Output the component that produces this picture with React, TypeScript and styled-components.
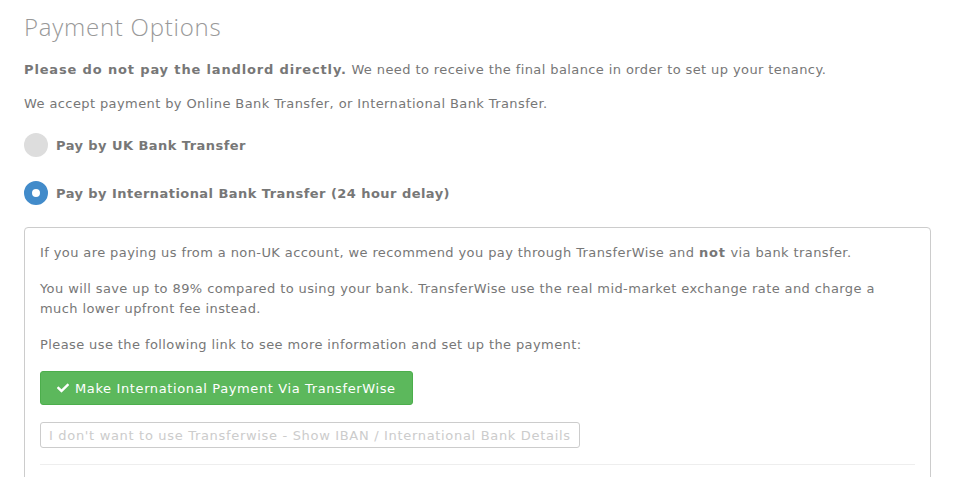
import styled, { createGlobalStyle } from "styled-components";
import { FaCheck } from "react-icons/fa";

const GlobalStyle = createGlobalStyle`
  body {
    margin: 0;
    background: #ffffff;
    font-family: "DejaVu Sans", Verdana, sans-serif;
    color: #777777;
  }
`;

const App = () => {
  return (
    <>
      <GlobalStyle />
      <Page>
        <Title>Payment Options</Title>
        <Text $gap={14}>
          <strong>Please do not pay the landlord directly.</strong> We need to
          receive the final balance in order to set up your tenancy.
        </Text>
        <Text $gap={19}>
          We accept payment by Online Bank Transfer, or International Bank
          Transfer.
        </Text>
        <RadioRow $gap={24}>
          <Radio $checked={false} />
          <RadioLabel>Pay by UK Bank Transfer</RadioLabel>
        </RadioRow>
        <RadioRow $gap={22}>
          <Radio $checked />
          <RadioLabel>Pay by International Bank Transfer (24 hour delay)</RadioLabel>
        </RadioRow>
        <Panel>
          <Text $gap={16}>
            If you are paying us from a non-UK account, we recommend you pay
            through TransferWise and <strong>not</strong> via bank transfer.
          </Text>
          <Text $gap={16}>
            You will save up to 89% compared to using your bank. TransferWise
            use the real mid-market exchange rate and charge a much lower
            upfront fee instead.
          </Text>
          <Text $gap={16}>
            Please use the following link to see more information and set up
            the payment:
          </Text>
          <PrimaryButton>
            <FaCheck size={12} />
            Make International Payment Via TransferWise
          </PrimaryButton>
          <GhostButton>
            I don't want to use Transferwise - Show IBAN / International Bank
            Details
          </GhostButton>
          <Divider />
        </Panel>
      </Page>
    </>
  );
};

const Page = styled.div`
  padding: 12px 26px 0 24px;
  height: 477px;
  box-sizing: border-box;
  overflow: hidden;
`;

const Title = styled.h1`
  margin: 0 0 18px;
  font-family: "Open Sans", "Lato", sans-serif;
  font-weight: 300;
  font-size: 24px;
  letter-spacing: 0.75px;
  line-height: 30px;
  color: #999999;
`;

const Text = styled.p<{ $gap: number }>`
  margin: 0 0 ${(p) => p.$gap}px;
  font-size: 13px;
  letter-spacing: 0.4px;
  line-height: 20px;
  color: #777777;

  strong {
    font-weight: 700;
    letter-spacing: 0.85px;
  }
`;

const RadioRow = styled.label<{ $gap: number }>`
  display: flex;
  align-items: center;
  gap: 8px;
  height: 24px;
  margin-bottom: ${(p) => p.$gap}px;
  cursor: pointer;
`;

const Radio = styled.span<{ $checked: boolean }>`
  width: 24px;
  height: 24px;
  border-radius: 50%;
  box-sizing: border-box;
  background: ${(p) => (p.$checked ? "#ffffff" : "#dddddd")};
  border: ${(p) => (p.$checked ? "8px solid #428bca" : "none")};
  flex-shrink: 0;
`;

const RadioLabel = styled.span`
  font-size: 13px;
  letter-spacing: 0.45px;
  font-weight: 700;
  color: #777777;
`;

const Panel = styled.div`
  border: 1px solid #cccccc;
  border-radius: 4px;
  padding: 15px 15px 0;
  height: 260px;
`;

const PrimaryButton = styled.button`
  display: flex;
  align-items: center;
  gap: 6px;
  height: 34px;
  padding: 0 16px;
  border: 1px solid #4cae4c;
  border-radius: 3px;
  background: #5cb85c;
  color: #ffffff;
  font-family: "DejaVu Sans", Verdana, sans-serif;
  font-size: 13px;
  letter-spacing: 0.62px;
  margin-bottom: 17px;
  cursor: pointer;
`;

const GhostButton = styled.button`
  display: block;
  height: 26px;
  padding: 0 8px;
  border: 1px solid #cccccc;
  border-radius: 3px;
  background: #ffffff;
  color: #cccccc;
  font-family: "DejaVu Sans", Verdana, sans-serif;
  font-size: 13px;
  letter-spacing: 0.68px;
  margin-bottom: 16px;
`;

const Divider = styled.hr`
  margin: 0;
  border: 0;
  border-top: 1px solid #eeeeee;
`;

export default App;
